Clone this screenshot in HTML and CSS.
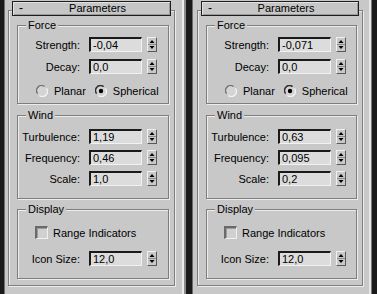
FILE: index.html
```html
<!DOCTYPE html>
<html>
<head>
<meta charset="utf-8">
<link rel="stylesheet" href="styles.css">
</head>
<body>
<div class="screen">
  <div class="edge edge-left"></div>

  <div class="panel panel-a">
    <div class="rollout">
      <div class="rhead"><span class="minus">-</span><span class="title">Parameters</span></div>

      <div class="group g-force">
        <span class="legend">Force</span>
        <div class="row">
          <span class="lbl">Strength:</span>
          <span class="field">-0,04</span>
          <span class="spin"><svg width="8" height="13" viewBox="0 0 8 13"><path d="M4 2 L6.5 5 L1.5 5 Z" fill="#000"/><line x1="0" y1="6.5" x2="8" y2="6.5" stroke="#8a8a8a"/><path d="M1.5 8 L6.5 8 L4 11 Z" fill="#000"/></svg></span>
        </div>
        <div class="row">
          <span class="lbl">Decay:</span>
          <span class="field">0,0</span>
          <span class="spin"><svg width="8" height="13" viewBox="0 0 8 13"><path d="M4 2 L6.5 5 L1.5 5 Z" fill="#000"/><line x1="0" y1="6.5" x2="8" y2="6.5" stroke="#8a8a8a"/><path d="M1.5 8 L6.5 8 L4 11 Z" fill="#000"/></svg></span>
        </div>
        <div class="radios">
          <span class="radio"><svg width="12" height="12" viewBox="0 0 12 12"><circle cx="6" cy="6" r="5" fill="#d4d4d4"/><path d="M1.6 8.6 A5 5 0 0 1 8.6 1.6" fill="none" stroke="#707070" stroke-width="1.3"/><path d="M10.4 3.4 A5 5 0 0 1 3.4 10.4" fill="none" stroke="#f4f4f4" stroke-width="1.3"/></svg></span>
          <span class="rlbl">Planar</span>
          <span class="radio r2"><svg width="12" height="12" viewBox="0 0 12 12"><circle cx="6" cy="6" r="5" fill="#d4d4d4"/><path d="M1.6 8.6 A5 5 0 0 1 8.6 1.6" fill="none" stroke="#2e2e2e" stroke-width="1.5"/><path d="M10.4 3.4 A5 5 0 0 1 3.4 10.4" fill="none" stroke="#f4f4f4" stroke-width="1.3"/><circle cx="6" cy="6" r="2.2" fill="#000"/></svg></span>
          <span class="rlbl">Spherical</span>
        </div>
      </div>

      <div class="group g-wind">
        <span class="legend">Wind</span>
        <div class="row">
          <span class="lbl">Turbulence:</span>
          <span class="field">1,19</span>
          <span class="spin"><svg width="8" height="13" viewBox="0 0 8 13"><path d="M4 2 L6.5 5 L1.5 5 Z" fill="#000"/><line x1="0" y1="6.5" x2="8" y2="6.5" stroke="#8a8a8a"/><path d="M1.5 8 L6.5 8 L4 11 Z" fill="#000"/></svg></span>
        </div>
        <div class="row">
          <span class="lbl">Frequency:</span>
          <span class="field">0,46</span>
          <span class="spin"><svg width="8" height="13" viewBox="0 0 8 13"><path d="M4 2 L6.5 5 L1.5 5 Z" fill="#000"/><line x1="0" y1="6.5" x2="8" y2="6.5" stroke="#8a8a8a"/><path d="M1.5 8 L6.5 8 L4 11 Z" fill="#000"/></svg></span>
        </div>
        <div class="row">
          <span class="lbl">Scale:</span>
          <span class="field">1,0</span>
          <span class="spin"><svg width="8" height="13" viewBox="0 0 8 13"><path d="M4 2 L6.5 5 L1.5 5 Z" fill="#000"/><line x1="0" y1="6.5" x2="8" y2="6.5" stroke="#8a8a8a"/><path d="M1.5 8 L6.5 8 L4 11 Z" fill="#000"/></svg></span>
        </div>
      </div>

      <div class="group g-display">
        <span class="legend">Display</span>
        <div class="check-row">
          <span class="check"></span>
          <span class="rlbl">Range Indicators</span>
        </div>
        <div class="row">
          <span class="lbl">Icon Size:</span>
          <span class="field">12,0</span>
          <span class="spin"><svg width="8" height="13" viewBox="0 0 8 13"><path d="M4 2 L6.5 5 L1.5 5 Z" fill="#000"/><line x1="0" y1="6.5" x2="8" y2="6.5" stroke="#8a8a8a"/><path d="M1.5 8 L6.5 8 L4 11 Z" fill="#000"/></svg></span>
        </div>
      </div>
    </div>
  </div>

  <div class="divider"></div>

  <div class="panel panel-b">
    <div class="rollout">
      <div class="rhead"><span class="minus">-</span><span class="title">Parameters</span></div>

      <div class="group g-force">
        <span class="legend">Force</span>
        <div class="row">
          <span class="lbl">Strength:</span>
          <span class="field">-0,071</span>
          <span class="spin"><svg width="8" height="13" viewBox="0 0 8 13"><path d="M4 2 L6.5 5 L1.5 5 Z" fill="#000"/><line x1="0" y1="6.5" x2="8" y2="6.5" stroke="#8a8a8a"/><path d="M1.5 8 L6.5 8 L4 11 Z" fill="#000"/></svg></span>
        </div>
        <div class="row">
          <span class="lbl">Decay:</span>
          <span class="field">0,0</span>
          <span class="spin"><svg width="8" height="13" viewBox="0 0 8 13"><path d="M4 2 L6.5 5 L1.5 5 Z" fill="#000"/><line x1="0" y1="6.5" x2="8" y2="6.5" stroke="#8a8a8a"/><path d="M1.5 8 L6.5 8 L4 11 Z" fill="#000"/></svg></span>
        </div>
        <div class="radios">
          <span class="radio"><svg width="12" height="12" viewBox="0 0 12 12"><circle cx="6" cy="6" r="5" fill="#d4d4d4"/><path d="M1.6 8.6 A5 5 0 0 1 8.6 1.6" fill="none" stroke="#707070" stroke-width="1.3"/><path d="M10.4 3.4 A5 5 0 0 1 3.4 10.4" fill="none" stroke="#f4f4f4" stroke-width="1.3"/></svg></span>
          <span class="rlbl">Planar</span>
          <span class="radio r2"><svg width="12" height="12" viewBox="0 0 12 12"><circle cx="6" cy="6" r="5" fill="#d4d4d4"/><path d="M1.6 8.6 A5 5 0 0 1 8.6 1.6" fill="none" stroke="#2e2e2e" stroke-width="1.5"/><path d="M10.4 3.4 A5 5 0 0 1 3.4 10.4" fill="none" stroke="#f4f4f4" stroke-width="1.3"/><circle cx="6" cy="6" r="2.2" fill="#000"/></svg></span>
          <span class="rlbl">Spherical</span>
        </div>
      </div>

      <div class="group g-wind">
        <span class="legend">Wind</span>
        <div class="row">
          <span class="lbl">Turbulence:</span>
          <span class="field">0,63</span>
          <span class="spin"><svg width="8" height="13" viewBox="0 0 8 13"><path d="M4 2 L6.5 5 L1.5 5 Z" fill="#000"/><line x1="0" y1="6.5" x2="8" y2="6.5" stroke="#8a8a8a"/><path d="M1.5 8 L6.5 8 L4 11 Z" fill="#000"/></svg></span>
        </div>
        <div class="row">
          <span class="lbl">Frequency:</span>
          <span class="field">0,095</span>
          <span class="spin"><svg width="8" height="13" viewBox="0 0 8 13"><path d="M4 2 L6.5 5 L1.5 5 Z" fill="#000"/><line x1="0" y1="6.5" x2="8" y2="6.5" stroke="#8a8a8a"/><path d="M1.5 8 L6.5 8 L4 11 Z" fill="#000"/></svg></span>
        </div>
        <div class="row">
          <span class="lbl">Scale:</span>
          <span class="field">0,2</span>
          <span class="spin"><svg width="8" height="13" viewBox="0 0 8 13"><path d="M4 2 L6.5 5 L1.5 5 Z" fill="#000"/><line x1="0" y1="6.5" x2="8" y2="6.5" stroke="#8a8a8a"/><path d="M1.5 8 L6.5 8 L4 11 Z" fill="#000"/></svg></span>
        </div>
      </div>

      <div class="group g-display">
        <span class="legend">Display</span>
        <div class="check-row">
          <span class="check"></span>
          <span class="rlbl">Range Indicators</span>
        </div>
        <div class="row">
          <span class="lbl">Icon Size:</span>
          <span class="field">12,0</span>
          <span class="spin"><svg width="8" height="13" viewBox="0 0 8 13"><path d="M4 2 L6.5 5 L1.5 5 Z" fill="#000"/><line x1="0" y1="6.5" x2="8" y2="6.5" stroke="#8a8a8a"/><path d="M1.5 8 L6.5 8 L4 11 Z" fill="#000"/></svg></span>
        </div>
      </div>
    </div>
  </div>

  <div class="edge edge-right"></div>
</div>
</body>
</html>
```

FILE: styles.css
```css
* { box-sizing: border-box; }

html, body {
  margin: 0;
  padding: 0;
  background: #1c1c1c;
}

body {
  font-family: "Liberation Sans", Arial, sans-serif;
  font-size: 11px;
  color: #000;
}

.screen {
  display: flex;
  width: 377px;
  height: 294px;
  overflow: hidden;
}

.edge-left {
  width: 5px;
  background: linear-gradient(to right, #1a1a1a 0 4px, #6e6e6e 4px);
}

.edge-right {
  width: 6px;
  background: linear-gradient(to right, #7a7a7a 0 1px, #1a1a1a 1px);
}

.divider {
  width: 9px;
  background: linear-gradient(to right, #8c8c8c 0 2px, #1a1a1a 2px 8px, #6c6c6c 8px);
}

.panel {
  background: #c8c8c8;
  height: 294px;
}

.panel-a {
  width: 179px;
  padding-left: 3px;
  border-right: 2px solid #ececec;
}

.panel-b {
  width: 178px;
  padding-left: 4px;
  border-right: 2px solid #e6e6e6;
}

.rollout {
  margin-top: 10px;
  width: 167px;
  height: 276px;
  border: 1px solid #7e7e7e;
  box-shadow: inset 1px 1px 0 #ececec, 1px 1px 0 #ececec;
  display: flex;
  flex-direction: column;
}

.panel-b .rollout {
  width: 166px;
}

.rhead {
  margin: -10px 3px 0 3px;
  height: 15px;
  border: 1px solid #1e1e1e;
  background: #c6c6c6;
  box-shadow: inset 1px 1px 0 #e2e2e2, inset -1px -1px 0 #9a9a9a;
  display: flex;
  align-items: center;
  line-height: 13px;
}

.minus {
  width: 0;
  padding-left: 6px;
  overflow: visible;
  font-size: 12px;
}

.title {
  flex: 1;
  text-align: center;
  padding-left: 6px;
}

.group {
  position: relative;
  margin: 9px 5px 0 8px;
  border: 1px solid #7e7e7e;
  box-shadow: inset 1px 1px 0 #ececec, 1px 1px 0 #ececec;
  display: flex;
  flex-direction: column;
}

.legend {
  position: absolute;
  top: -8px;
  left: 8px;
  padding: 0 2px;
  background: #c8c8c8;
  line-height: 14px;
}

.g-force {
  height: 79px;
  padding-top: 11px;
  gap: 7px;
}

.g-wind {
  margin-top: 11px;
  height: 84px;
  padding-top: 13px;
  gap: 6px;
}

.g-display {
  margin-top: 10px;
  height: 70px;
  padding-top: 16px;
}

.row {
  display: flex;
  align-items: center;
  height: 15px;
}

.lbl {
  width: 62px;
  text-align: right;
  white-space: nowrap;
}

.field {
  margin-left: 9px;
  width: 53px;
  height: 15px;
  background: #dcdcdc;
  border-top: 2px solid #1a1a1a;
  border-left: 2px solid #1a1a1a;
  border-right: 1px solid #f2f2f2;
  border-bottom: 1px solid #f2f2f2;
  padding-left: 2px;
  line-height: 12px;
  white-space: nowrap;
}

.spin {
  margin-left: 5px;
  width: 10px;
  height: 15px;
  border-top: 1px solid #f0f0f0;
  border-left: 1px solid #f0f0f0;
  border-right: 1px solid #5a5a5a;
  border-bottom: 1px solid #5a5a5a;
  background: #c8c8c8;
  display: flex;
}

.spin svg {
  display: block;
}

.radios {
  display: flex;
  align-items: center;
  margin-top: 4px;
  height: 12px;
  padding-left: 18px;
}

.radio {
  display: flex;
  width: 12px;
  height: 12px;
}

.radio.r2 {
  margin-left: 9px;
}

.rlbl {
  margin-left: 6px;
  white-space: nowrap;
  line-height: 12px;
}

.check-row {
  display: flex;
  align-items: center;
  padding-left: 17px;
  height: 13px;
  margin-bottom: 12px;
}

.check {
  width: 13px;
  height: 13px;
  background: #d0d0d0;
  border-top: 2px solid #6a6a6a;
  border-left: 2px solid #6a6a6a;
  border-right: 1px solid #f0f0f0;
  border-bottom: 1px solid #f0f0f0;
  box-shadow: inset 1px 1px 0 #9c9c9c;
}

.check-row .rlbl {
  margin-left: 5px;
}
```
